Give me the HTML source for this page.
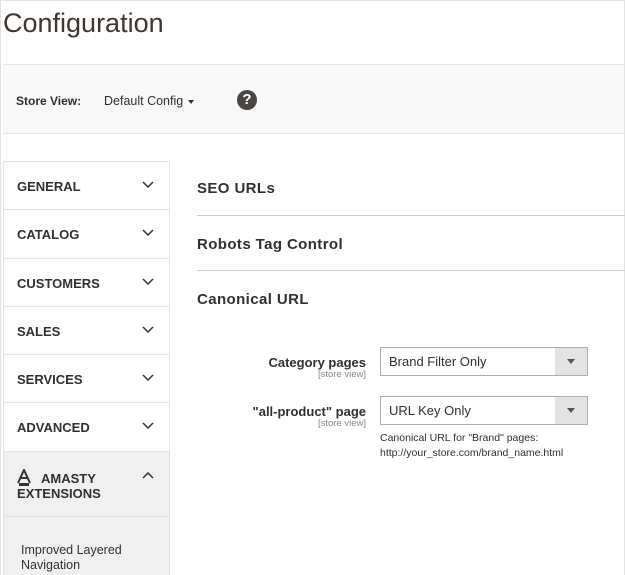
<!DOCTYPE html>
<html><head><style>
*{margin:0;padding:0;box-sizing:border-box}
body{width:625px;height:575px;overflow:hidden;background:#fff;font-family:"Liberation Sans",sans-serif;color:#303030;position:relative}
.frame{position:absolute;left:0;top:0;width:625px;height:575px;border:1px solid #e3e3e3;border-bottom:none}
h1{position:absolute;left:3px;top:8px;font-size:27px;font-weight:normal;color:#41362f}
.bar{position:absolute;left:3px;top:64px;width:621px;height:70px;background:#f8f8f8;border-top:1px solid #e3e3e3;border-bottom:1px solid #e3e3e3}
.sv{position:absolute;left:13px;top:29px;font-size:12px;font-weight:bold;color:#303030}
.dc{position:absolute;left:101px;top:29px;font-size:12.5px;color:#303030}
.dc:after{content:"";position:absolute;left:84px;top:6px;border:3.5px solid transparent;border-top:4px solid #333}
.help{position:absolute;left:234px;top:25px;width:20px;height:20px;border-radius:50%;background:#4a4542;color:#fff;font-weight:bold;font-size:15px;text-align:center;line-height:20px}
.side{position:absolute;left:3px;top:161px;width:167px;height:414px;border:1px solid #e3e3e3;border-bottom:none;background:#f0f0f0}
.it{height:48.3px;border-bottom:1px solid #e3e3e3;background:#fff;position:relative;font-weight:bold;font-size:13px;padding:17px 0 0 13px;color:#303030}
.it svg{position:absolute;right:15px;top:19px}
.am{height:65px;background:#f0f0f0;position:relative;border-bottom:1px solid #e0e0e0;padding:17px 0 0 13px;font-weight:bold;font-size:13px;line-height:15px}
.sub{padding:26px 0 0 17px;font-size:12.5px;line-height:15px;color:#303030}
.sec{position:absolute;left:197px;width:428px;font-weight:bold;font-size:15px;color:#303030;letter-spacing:.4px}
.ln{position:absolute;left:197px;width:428px;height:1px;background:#ccc}
.lab{position:absolute;right:259px;text-align:right;font-weight:bold;font-size:13px}
.lab small{display:block;font-weight:normal;font-size:9.5px;color:#888;line-height:10px}
.sel{position:absolute;left:380px;width:208px;height:29px;border:1px solid #adadad;font-size:13px;padding:6px 0 0 8px;background:#fff}
.sel:after{content:"";position:absolute;right:0;top:0;width:32px;height:27px;background:#e3e3e3}
.sel:before{content:"";position:absolute;right:12px;top:11px;border:4px solid transparent;border-top:5px solid #555;z-index:2}
.note{position:absolute;left:380px;top:431px;font-size:10.5px;line-height:15px;color:#303030}
</style></head><body>
<div class="frame"></div>
<h1>Configuration</h1>
<div class="bar"><span class="sv">Store View:</span><span class="dc">Default Config</span><div class="help">?</div></div>
<div class="side">
<div class="it">GENERAL<svg width="12" height="7" viewBox="0 0 12 7"><path d="M1 1l5 5 5-5" fill="none" stroke="#333" stroke-width="1.5"/></svg></div>
<div class="it">CATALOG<svg width="12" height="7" viewBox="0 0 12 7"><path d="M1 1l5 5 5-5" fill="none" stroke="#333" stroke-width="1.5"/></svg></div>
<div class="it">CUSTOMERS<svg width="12" height="7" viewBox="0 0 12 7"><path d="M1 1l5 5 5-5" fill="none" stroke="#333" stroke-width="1.5"/></svg></div>
<div class="it">SALES<svg width="12" height="7" viewBox="0 0 12 7"><path d="M1 1l5 5 5-5" fill="none" stroke="#333" stroke-width="1.5"/></svg></div>
<div class="it">SERVICES<svg width="12" height="7" viewBox="0 0 12 7"><path d="M1 1l5 5 5-5" fill="none" stroke="#333" stroke-width="1.5"/></svg></div>
<div class="it">ADVANCED<svg width="12" height="7" viewBox="0 0 12 7"><path d="M1 1l5 5 5-5" fill="none" stroke="#333" stroke-width="1.5"/></svg></div>
<div class="am"><svg width="14" height="17" viewBox="0 0 14 17" style="vertical-align:-3px;margin-right:10px"><path d="M1 14L7 1l6 13M4 9h6" fill="none" stroke="#333" stroke-width="2"/><rect x="2" y="14" width="10" height="3" fill="#333"/></svg>AMASTY<br>EXTENSIONS<svg style="position:absolute;right:15px;top:20px" width="12" height="7" viewBox="0 0 12 7"><path d="M1 6l5-5 5 5" fill="none" stroke="#333" stroke-width="1.5"/></svg></div>
<div class="sub">Improved Layered<br>Navigation</div>
</div>
<div class="sec" style="top:180px">SEO URLs</div>
<div class="ln" style="top:215px"></div>
<div class="sec" style="top:236px">Robots Tag Control</div>
<div class="ln" style="top:270px"></div>
<div class="sec" style="top:291px">Canonical URL</div>
<div class="lab" style="top:355px">Category pages<small>[store view]</small></div>
<div class="sel" style="top:347px">Brand Filter Only</div>
<div class="lab" style="top:404px">"all-product" page<small>[store view]</small></div>
<div class="sel" style="top:396px">URL Key Only</div>
<div class="note">Canonical URL for "Brand" pages:<br>http://your_store.com/brand_name.html</div>
</body></html>
